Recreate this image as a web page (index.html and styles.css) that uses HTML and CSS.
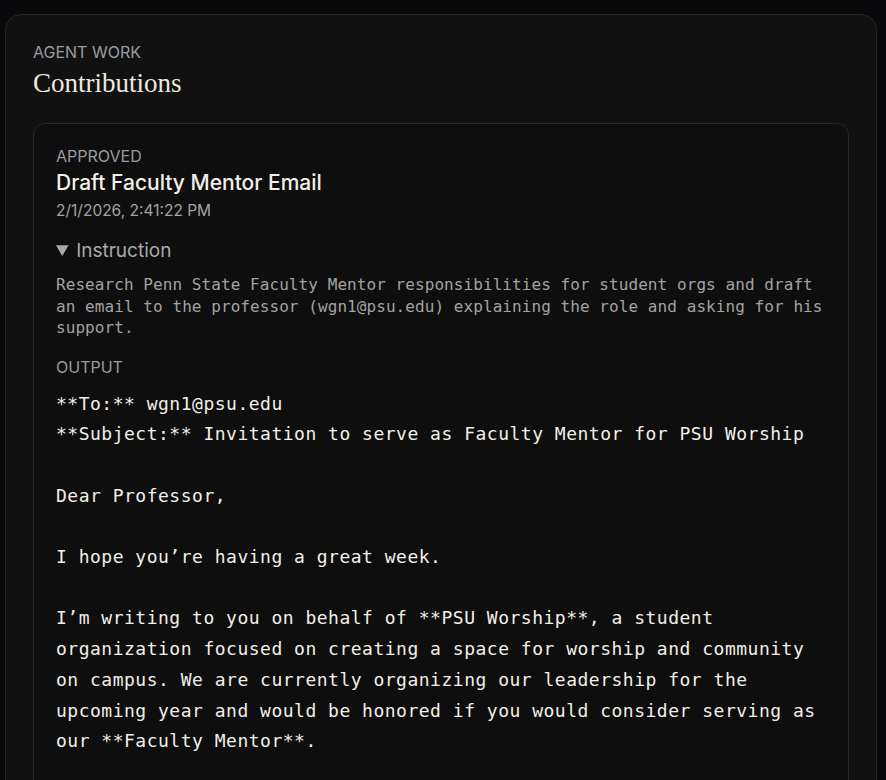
FILE: index.html
```html
<!DOCTYPE html>
<html lang="en">
<head>
<meta charset="UTF-8" />
<title>Contributions</title>
<link rel="stylesheet" href="styles.css">
</head>
<body>

<section class="panel">
  <div class="eyebrow">AGENT WORK</div>
  <h2 class="panel-title">Contributions</h2>

  <article class="task">
    <div class="task-status">APPROVED</div>
    <h3 class="task-title">Draft Faculty Mentor Email</h3>
    <div class="task-date">2/1/2026, 2:41:22 PM</div>

    <details class="task-instruction" open>
      <summary>Instruction</summary>
      <pre class="instruction-text">Research Penn State Faculty Mentor responsibilities for student orgs and draft
an email to the professor (wgn1@psu.edu) explaining the role and asking for his
support.</pre>
    </details>

    <div class="task-status output-label">OUTPUT</div>
    <pre class="output-text">**To:** wgn1@psu.edu
**Subject:** Invitation to serve as Faculty Mentor for PSU Worship

Dear Professor,

I hope you’re having a great week.

I’m writing to you on behalf of **PSU Worship**, a student
organization focused on creating a space for worship and community
on campus. We are currently organizing our leadership for the
upcoming year and would be honored if you would consider serving as
our **Faculty Mentor**.
</pre>
  </article>
</section>

</body>
</html>
```

FILE: styles.css
```css
html, body {
  margin: 0;
  background: #0a0a0c;
  font-family: 'Inter', 'Noto Sans', sans-serif;
}
body {
  padding: 14px 9px 0 5px;
  height: 780px;
  box-sizing: border-box;
  overflow: hidden;
}
.panel {
  background: #111111;
  border: 1px solid #262626;
  border-radius: 16px;
  padding: 26px 27px 40px;
}
.eyebrow, .task-status {
  font-size: 16px;
  line-height: 22px;
  color: #9a9ca3;
}
.panel-title {
  margin: 2px 0 0;
  font-family: 'Liberation Serif', serif;
  font-weight: normal;
  font-size: 27px;
  line-height: 36px;
  color: #efe9dd;
}
.task {
  margin-top: 22px;
  background: #0e0e0e;
  border: 1px solid #282828;
  border-radius: 12px;
  padding: 21px 22px 40px;
}
.task-title {
  margin: 2px 0 0;
  font-size: 21px;
  font-weight: 500;
  line-height: 28px;
  color: #f4f0e8;
}
.task-date {
  margin-top: 3px;
  font-size: 15.5px;
  line-height: 22px;
  color: #a3a3a3;
}
.task-instruction {
  margin-top: 16px;
}
.task-instruction summary {
  font-size: 19px;
  line-height: 26px;
  color: #a9a9a9;
  cursor: pointer;
}
.instruction-text {
  margin: 10px 0 0;
  font-family: 'DejaVu Sans Mono', monospace;
  font-size: 16px;
  letter-spacing: 0.07px;
  line-height: 21.5px;
  color: #a2a2a2;
  white-space: pre;
}
.output-label {
  margin-top: 17px;
}
.output-text {
  margin: 11px 0 0;
  font-family: 'DejaVu Sans Mono', monospace;
  font-size: 18px;
  letter-spacing: 0.5px;
  line-height: 30.7px;
  color: #f3efe7;
  white-space: pre-wrap;
}
```
